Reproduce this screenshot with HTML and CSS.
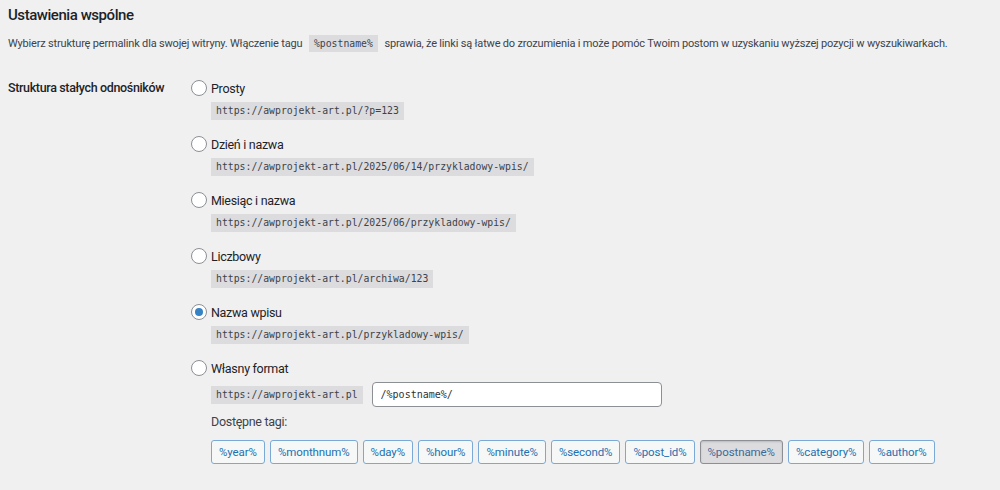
FILE: index.html
```html
<!DOCTYPE html>
<html lang="pl">
<head>
    <meta charset="UTF-8">
    <title>Ustawienia bezpośrednich odnośników</title>
    <link rel="stylesheet" href="styles.css">
</head>
<body>
    <div class="wrap">
        <h2 class="title">Ustawienia wspólne</h2>
        <p class="desc">Wybierz strukturę permalink dla swojej witryny. Włączenie tagu <code>%postname%</code> sprawia, że linki są łatwe do zrozumienia i może pomóc Twoim postom w uzyskaniu wyższej pozycji w wyszukiwarkach.</p>

        <div class="form-row">
            <div class="row-title">Struktura stałych odnośników</div>
            <fieldset class="options">
                <div class="option">
                    <label><input type="radio" name="perm"> Prosty</label>
                    <code>https://awprojekt-art.pl/?p=123</code>
                </div>
                <div class="option">
                    <label><input type="radio" name="perm"> Dzień i nazwa</label>
                    <code>https://awprojekt-art.pl/2025/06/14/przykladowy-wpis/</code>
                </div>
                <div class="option">
                    <label><input type="radio" name="perm"> Miesiąc i nazwa</label>
                    <code>https://awprojekt-art.pl/2025/06/przykladowy-wpis/</code>
                </div>
                <div class="option">
                    <label><input type="radio" name="perm"> Liczbowy</label>
                    <code>https://awprojekt-art.pl/archiwa/123</code>
                </div>
                <div class="option">
                    <label><input type="radio" name="perm" checked> Nazwa wpisu</label>
                    <code>https://awprojekt-art.pl/przykladowy-wpis/</code>
                </div>
                <div class="option custom">
                    <label><input type="radio" name="perm"> Własny format</label>
                    <div class="custom-row">
                        <code>https://awprojekt-art.pl</code>
                        <input type="text" class="struct" value="/%postname%/">
                    </div>
                    <div class="tags-title">Dostępne tagi:</div>
                    <ul class="tags">
                        <li><button>%year%</button></li>
                        <li><button>%monthnum%</button></li>
                        <li><button>%day%</button></li>
                        <li><button>%hour%</button></li>
                        <li><button>%minute%</button></li>
                        <li><button>%second%</button></li>
                        <li><button>%post_id%</button></li>
                        <li><button class="active">%postname%</button></li>
                        <li><button>%category%</button></li>
                        <li><button>%author%</button></li>
                    </ul>
                </div>
            </fieldset>
        </div>
    </div>
</body>
</html>
```

FILE: styles.css
```css
body{
    margin: 0;
    padding: 0;
    background-color: #f0f0f1;
    color: #3c434a;
    font-family: Roboto, "Open Sans", sans-serif;
    font-size: 12.5px;
}
.wrap{
    padding: 0 8px;
}
.title{
    margin: 0;
    padding-top: 4px;
    height: 22px;
    line-height: 22px;
    font-size: 15px;
    font-weight: 500;
    letter-spacing: -0.45px;
    color: #1d2327;
}
.desc{
    margin: 6px 0 0;
    line-height: 24px;
    font-size: 11px;
    letter-spacing: -0.18px;
    white-space: nowrap;
}
code{
    font-family: "DejaVu Sans Mono", monospace;
    font-size: 9.8px;
    letter-spacing: 0;
    background-color: #dcdcde;
    padding: 3px 5px 3px;
    color: #3c434a;
}
.desc code{
    margin: 0 4px;
}
.form-row{
    display: flex;
    margin-top: 22px;
}
.row-title{
    width: 183px;
    flex-shrink: 0;
    line-height: 20px;
    font-weight: 500;
    letter-spacing: -0.35px;
    color: #1d2327;
}
.options{
    margin: 0;
    padding: 0;
    border: none;
}
.option{
    display: flex;
    flex-direction: column;
    align-items: flex-start;
    margin-bottom: 14px;
}
.option label{
    display: flex;
    align-items: center;
    height: 20px;
    color: #1d2327;
    letter-spacing: -0.3px;
    margin-bottom: 4px;
}
.option > code{
    margin-left: 20px;
    line-height: 12px;
}
input[type=radio]{
    appearance: none;
    width: 16px;
    height: 16px;
    margin: 0 4px 0 0;
    border: 1px solid #8c8f94;
    border-radius: 50%;
    background: #fff;
    display: flex;
    align-items: center;
    justify-content: center;
}
input[type=radio]:checked::before{
    content: "";
    width: 8px;
    height: 8px;
    border-radius: 50%;
    background: #3582c4;
}
.custom-row{
    display: flex;
    align-items: center;
    gap: 9px;
    margin: 0 0 0 20px;
}
.custom-row code{
    line-height: 12px;
}
.struct{
    width: 290px;
    height: 25px;
    box-sizing: border-box;
    border: 1px solid #8c8f94;
    border-radius: 4px;
    padding: 0 8px;
    font-family: "DejaVu Sans Mono", monospace;
    font-size: 10px;
    color: #2c3338;
    background: #fff;
}
.tags-title{
    margin: 5px 0 0 20px;
    line-height: 20px;
    letter-spacing: -0.3px;
}
.tags{
    list-style: none;
    margin: 8px 0 0 20px;
    padding: 0;
    display: flex;
    gap: 5px;
}
.tags button{
    height: 24px;
    margin: 0;
    padding: 0 7px;
    font-family: Roboto, "Open Sans", sans-serif;
    font-size: 11.5px;
    letter-spacing: -0.1px;
    color: #2271b1;
    background: #f6f7f7;
    border: 1px solid #7aa9d6;
    border-radius: 3px;
}
.tags button.active{
    background: #dcdcde;
    border-color: #8c8f94;
    color: #3c6a99;
    box-shadow: inset 0 1px 2px rgba(0,0,0,.15);
}
```
